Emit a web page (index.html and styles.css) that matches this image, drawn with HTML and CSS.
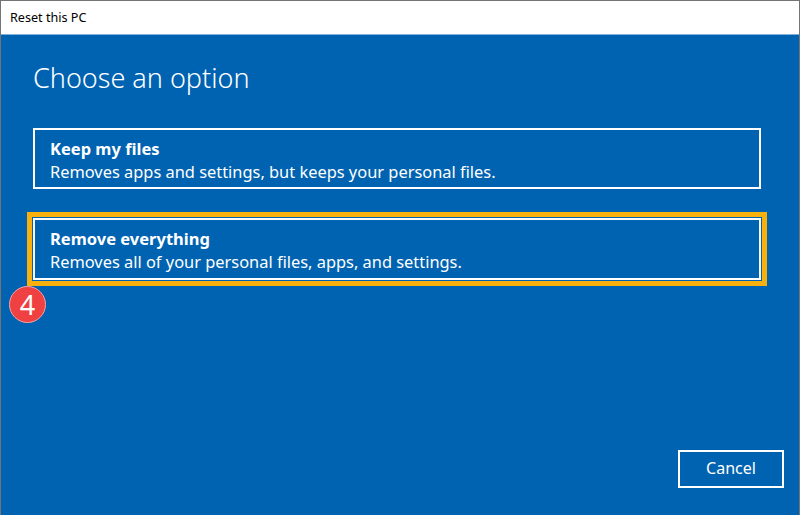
FILE: index.html
```html
<!DOCTYPE html>
<html>
<head>
	<title>Reset this PC</title>
	<link rel="stylesheet" href="styles.css">
</head>
<body>
	<div class="window">
		<div class="titlebar">Reset this PC</div>
		<div class="content">
			<h1 class="heading">Choose an option</h1>
			<div class="option">
				<div class="option-title">Keep my files</div>
				<div class="option-desc">Removes apps and settings, but keeps your personal files.</div>
			</div>
			<div class="option selected">
				<div class="option-title">Remove everything</div>
				<div class="option-desc">Removes all of your personal files, apps, and settings.</div>
			</div>
			<div class="step-badge">4</div>
			<div class="actions">
				<button class="cancel">Cancel</button>
			</div>
		</div>
	</div>
</body>
</html>
```

FILE: styles.css
```css
* {
	box-sizing: border-box;
}

body {
	margin: 0;
	font-family: "Noto Sans", "Open Sans", sans-serif;
	background: #fff;
}

.window {
	height: 515px;
	display: flex;
	flex-direction: column;
	border: 1px solid #747474;
	border-bottom: none;
}

.titlebar {
	height: 34px;
	flex: none;
	padding-left: 9px;
	font-size: 12.6px;
	line-height: 33px;
	color: #000;
	background: #fff;
	border-bottom: 1px solid #7fb0db;
}

.content {
	position: relative;
	flex: 1;
	display: flex;
	flex-direction: column;
	padding: 0 38px 27px 32px;
	background: #0063b1;
	color: #fff;
}

.heading {
	margin: 25px 0 32px;
	font-size: 27px;
	font-weight: 300;
	line-height: 36px;
}

.option {
	height: 61px;
	padding: 7px 15px 0;
	border: 2px solid #fff;
}

.option + .option {
	margin-top: 29px;
	height: 62px;
}

.option.selected {
	outline: 5px solid #f8b10c;
	outline-offset: 1px;
}

.option-title {
	font-size: 16.5px;
	font-weight: 700;
	line-height: 23px;
}

.option-desc {
	font-size: 16.4px;
	line-height: 23px;
}

.step-badge {
	position: absolute;
	left: 8px;
	top: 251px;
	width: 37px;
	height: 37px;
	border-radius: 50%;
	background: #ef4141;
	border: 1px solid #f7a3a3;
	color: #fff;
	font-size: 27px;
	line-height: 35px;
	text-align: center;
}

.actions {
	margin-top: auto;
	display: flex;
	justify-content: flex-end;
	margin-right: -23px;
}

.cancel {
	width: 106px;
	height: 38px;
	border: 2px solid #fff;
	background: transparent;
	color: #fff;
	font-family: inherit;
	font-size: 16px;
	padding: 0 0 2px;
}
```
